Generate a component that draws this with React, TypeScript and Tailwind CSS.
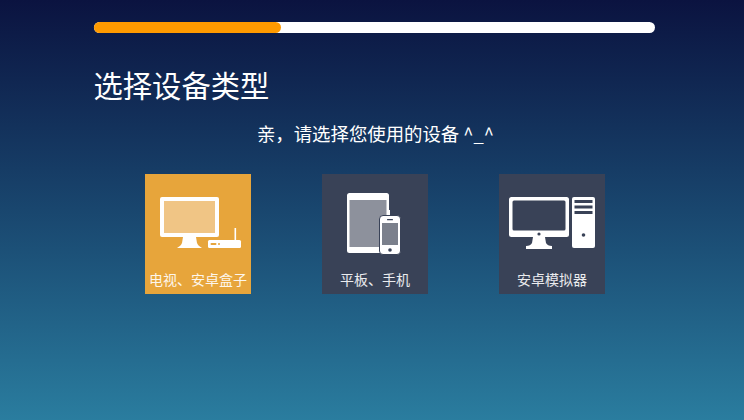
import React from 'react';

const font = { fontFamily: '"Noto Sans CJK SC", "Noto Sans", sans-serif' };

const TvIcon = () => (
  <svg width="106" height="90" viewBox="0 0 106 90" className="block">
    <rect x="15" y="23" width="59" height="40" rx="2" fill="#fff" />
    <rect x="19" y="27" width="51" height="32" fill="#f0c585" />
    <path d="M38 63h13l1 6c1 3 4 4 5 5H32c1-1 4-2 5-5z" fill="#fff" />
    <rect x="63" y="66" width="33" height="8" rx="1.5" fill="#fff" />
    <rect x="89.5" y="54" width="1.6" height="13" fill="#fff" />
    <rect x="65.5" y="69" width="6" height="2" rx="1" fill="#e7a53b" />
    <rect x="73" y="69" width="2" height="2" rx="1" fill="#e7a53b" />
  </svg>
);

const TabletIcon = () => (
  <svg width="106" height="90" viewBox="0 0 106 90" className="block">
    <rect x="25" y="19" width="42" height="60" rx="2.5" fill="#fff" />
    <rect x="27.5" y="26" width="37" height="47" fill="#8d919c" />
    <rect x="67" y="36" width="1" height="5" fill="#fff" />
    <rect x="57.5" y="41.5" width="21" height="39" rx="3.5" fill="#fff" stroke="#394257" strokeWidth="1" />
    <rect x="60" y="49" width="16" height="22" fill="#7b808c" />
    <rect x="65" y="45" width="6" height="1.3" rx="0.6" fill="#394257" />
    <circle cx="68" cy="76" r="1.8" fill="#394257" />
  </svg>
);

const PcIcon = () => (
  <svg width="106" height="90" viewBox="0 0 106 90" className="block">
    <rect x="10" y="23" width="60" height="40" rx="2.5" fill="#fff" />
    <rect x="13.5" y="26.5" width="53" height="30" rx="1.5" fill="#394257" />
    <circle cx="40" cy="60" r="1.6" fill="#394257" />
    <path d="M34 63h12l1 6c1 2 3 3 6 3v3H27v-3c3 0 5-1 6-3z" fill="#fff" />
    <rect x="73" y="23" width="23" height="51" rx="2" fill="#fff" />
    <rect x="75.5" y="26" width="18" height="3" fill="#394257" />
    <rect x="75.5" y="31.5" width="18" height="3" fill="#394257" />
    <rect x="75.5" y="37" width="18" height="3" fill="#394257" />
    <circle cx="84.5" cy="61" r="1.8" fill="#394257" />
  </svg>
);

const App: React.FC = () => {
  return (
    <div
      className="w-[744px] h-[420px] overflow-hidden bg-gradient-to-b from-[#0b1340] to-[#2a7d9f] pt-[22px] text-white"
      style={font}
    >
      <div className="ml-[94px] w-[561px] h-[11px] rounded-full bg-white">
        <div className="w-[187px] h-full rounded-full bg-[#ff9a00]"></div>
      </div>

      <h1 className="ml-[93.5px] mt-[30px] text-[29.3px] leading-[42px] font-normal">选择设备类型</h1>

      <p className="mt-[15px] text-center text-[18.4px] leading-[26px] w-[751px]">亲，请选择您使用的设备 ^_^</p>

      <div className="ml-[145px] mt-[28px] flex gap-[71px]">
        <div className="w-[106px] h-[120px] bg-[#e7a53b]">
          <TvIcon />
          <div className="mt-[5px] text-center text-[14px] leading-5 text-white/90">电视、安卓盒子</div>
        </div>
        <div className="w-[106px] h-[120px] bg-[#394257]">
          <TabletIcon />
          <div className="mt-[5px] text-center text-[14px] leading-5 text-white/90">平板、手机</div>
        </div>
        <div className="w-[106px] h-[120px] bg-[#394257]">
          <PcIcon />
          <div className="mt-[5px] text-center text-[14px] leading-5 text-white/90">安卓模拟器</div>
        </div>
      </div>
    </div>
  );
};

export default App;
